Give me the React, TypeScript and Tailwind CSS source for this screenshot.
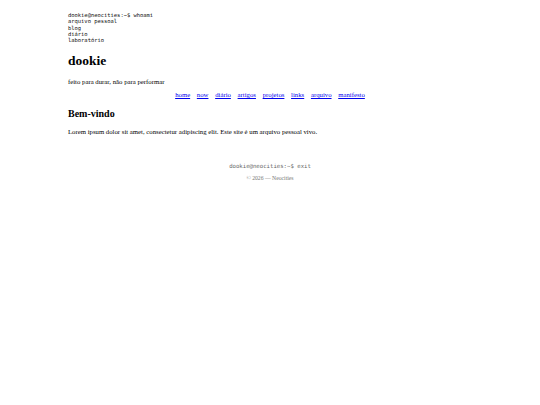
export default function App() {
  const links = ["home", "now", "diário", "artigos", "projetos", "links", "arquivo", "manifesto"];
  return (
    <div className="min-h-[405px] bg-white text-black">
      <div className="mx-auto w-[404px] pt-[12px] font-['Liberation_Serif',serif]">
        <pre className="m-0 font-['DejaVu_Sans_Mono',monospace] text-[5.45px] leading-[6.3px] text-[#111]">
{`dookie@neocities:~$ whoami
arquivo pessoal
blog
diário
laboratório`}
        </pre>
        <h1 className="mt-[10px] text-[13.5px] leading-[16px] font-bold">dookie</h1>
        <p className="mt-[9px] text-[6.75px] leading-[8px]">feito para durar, não para performar</p>
        <nav className="mt-[5px] flex justify-center gap-[6.7px] text-[6.75px] leading-[8px]">
          {links.map((l) => (
            <a key={l} href="#" className="text-[#0000EE] underline">
              {l}
            </a>
          ))}
        </nav>
        <h2 className="mt-[9px] text-[10px] leading-[12px] font-bold">Bem-vindo</h2>
        <p className="mt-[8px] text-[6.75px] leading-[8px]">
          Lorem ipsum dolor sit amet, consectetur adipiscing elit. Este site é um arquivo pessoal vivo.
        </p>
        <footer className="mt-[27px] text-center">
          <div className="font-['DejaVu_Sans_Mono',monospace] text-[5.67px] leading-[7px] text-[#666]">
            dookie@neocities:~$ exit
          </div>
          <div className="mt-[5px] text-[5.7px] leading-[7px] text-[#777]">© 2026 — Neocities</div>
        </footer>
      </div>
    </div>
  );
}
